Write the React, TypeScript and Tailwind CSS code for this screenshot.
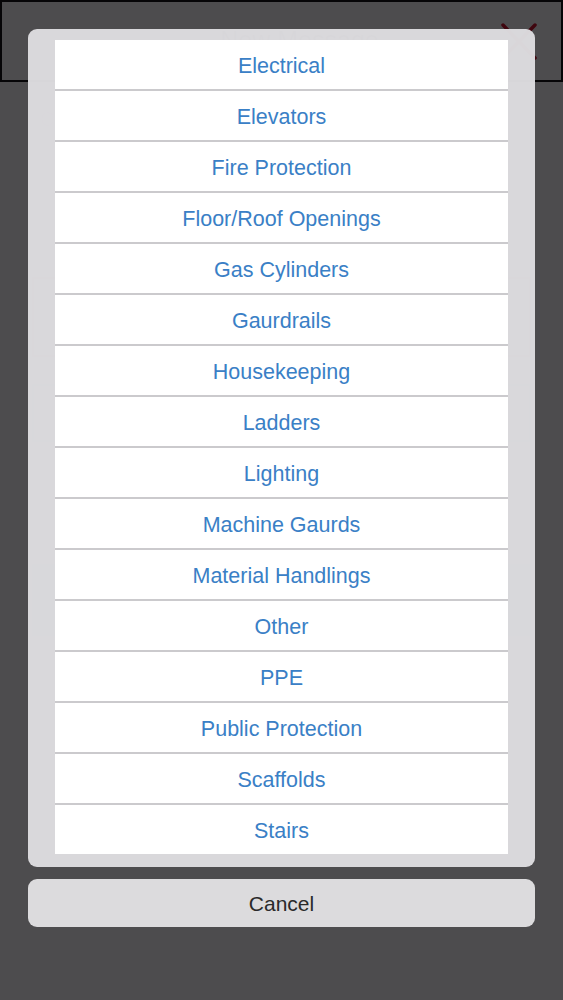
import React from 'react';

const categories = [
  'Electrical',
  'Elevators',
  'Fire Protection',
  'Floor/Roof Openings',
  'Gas Cylinders',
  'Gaurdrails',
  'Housekeeping',
  'Ladders',
  'Lighting',
  'Machine Gaurds',
  'Material Handlings',
  'Other',
  'PPE',
  'Public Protection',
  'Scaffolds',
  'Stairs',
];

function CloseIcon() {
  return (
    <svg width="36" height="37" viewBox="0 0 36 37" fill="none">
      <path d="M2 2 L34 35 M34 2 L2 35" stroke="#d0142c" strokeWidth="3.5" strokeLinecap="round" />
    </svg>
  );
}

// the form that sits behind the picker, dimmed
function MessageForm() {
  return (
    <div className="flex flex-col bg-white h-[1000px]">
      <div className="h-[82px] border-2 border-[#111] flex items-center justify-between pl-[60px] pr-[24px]">
        <div className="w-[36px]" />
        <span className="text-[25px] text-[#555]">New Message</span>
        <CloseIcon />
      </div>
      <div className="flex flex-col px-[32px]">
        <div className="h-[58px] border-y border-[#ccc] mt-[8px] flex items-center px-[8px] text-[20px] text-[#bbb]">
          Choose Category
        </div>
        <div className="h-[72px] border-b border-[#ccc] mt-[17px]" />
        <div className="h-[80px] border-2 border-[#e8a0a8] mt-[40px]" />
        <div className="h-[58px] border-2 border-[#b8d8b8] mt-[27px]" />
        <div className="h-[60px] border-2 border-[#ccc] mt-[15px]" />
        <div className="h-[72px] bg-[#b0d8c8] mt-[47px]" />
      </div>
    </div>
  );
}

export default function App() {
  return (
    <div className="relative w-full h-[1000px] overflow-hidden" style={{ fontFamily: '"Liberation Sans", Arial, sans-serif' }}>
      <MessageForm />
      {/* dim layer + action sheet */}
      <div className="absolute inset-0 bg-[#010003]/70 flex flex-col px-[28px] pt-[29px] gap-[12px]">
        <div className="rounded-[9px] bg-[#dedde0]/[0.97] pt-[11px] pb-[13px] px-[27px]">
          <div className="flex flex-col bg-white">
            {categories.map((c, i) => (
              <div
                key={c}
                className={
                  i === 0
                    ? 'h-[49px] pt-[4px] flex items-center justify-center text-[21.5px] text-[#3a80c6]'
                    : 'h-[51px] pt-[4px] border-t-2 border-[#cbcacd] flex items-center justify-center text-[21.5px] text-[#3a80c6]'
                }
              >
                {c}
              </div>
            ))}
          </div>
        </div>
        <button className="h-[48px] pt-[2px] rounded-[9px] bg-[#dcdbdd] text-[21px] text-[#2a2a2a]">Cancel</button>
      </div>
    </div>
  );
}
